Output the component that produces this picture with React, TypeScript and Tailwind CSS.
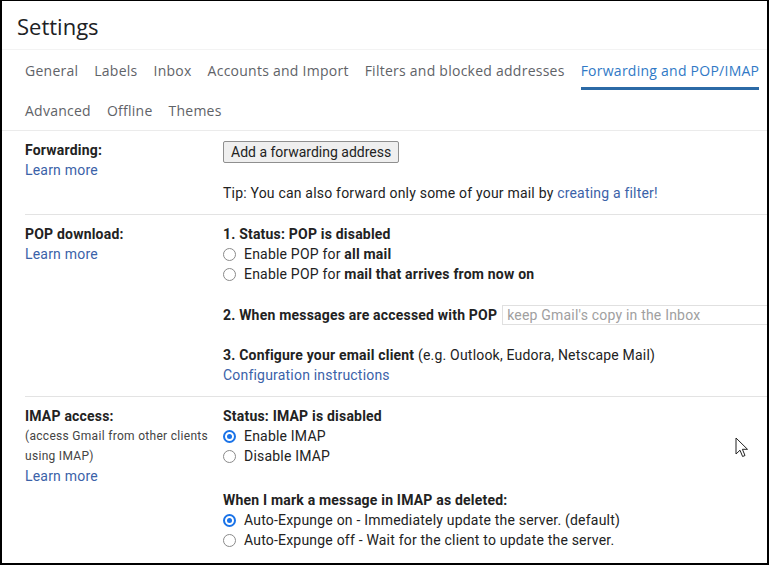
import React from "react";

const Radio = ({ checked = false, children }: { checked?: boolean; children: React.ReactNode }) => (
  <div className="flex items-center h-5 whitespace-nowrap">
    {checked ? (
      <span className="w-[13px] h-[13px] rounded-full border-[2px] border-[#1a73e8] flex items-center justify-center mr-[8px] shrink-0">
        <span className="w-[5px] h-[5px] rounded-full bg-[#1a73e8]" />
      </span>
    ) : (
      <span className="w-[13px] h-[13px] rounded-full border border-[#8a8a8a] mr-[8px] shrink-0 bg-white" />
    )}
    <span>{children}</span>
  </div>
);

const Tab = ({ label, active = false }: { label: string; active?: boolean }) => (
  <div className="flex flex-col px-2">
    <div className={`flex-1 flex items-center pt-[3px] ${active ? "text-[#3079c6]" : "text-[#5f6368]"}`}>{label}</div>
    <div className={`h-[3px] ${active ? "bg-[#2b6aa6]" : "bg-transparent"}`} />
  </div>
);

const Link = ({ children }: { children: React.ReactNode }) => (
  <span className="text-[#3b62a8]">{children}</span>
);

export default function App() {
  return (
    <div className="relative w-[769px] h-[565px] overflow-hidden bg-white border-l-2 border-t border-r-2 border-b-2 border-black box-border font-['Roboto',sans-serif] text-[14px] text-[#222] tracking-[0.2px]">
      <div className="h-[49px] pl-[15px] pt-[3px] flex items-center border-b border-[#f3f3f3] font-['Open_Sans',sans-serif] text-[22px] text-[#202124] tracking-normal">
        Settings
      </div>
      <div className="pl-[15px] border-b border-[#ebebeb] font-['Open_Sans',sans-serif] text-[14px] tracking-[0.25px] whitespace-nowrap">
        <div className="flex h-10">
          <Tab label="General" />
          <Tab label="Labels" />
          <Tab label="Inbox" />
          <Tab label="Accounts and Import" />
          <Tab label="Filters and blocked addresses" />
          <Tab label="Forwarding and POP/IMAP" active />
        </div>
        <div className="flex h-10">
          <Tab label="Advanced" />
          <Tab label="Offline" />
          <Tab label="Themes" />
        </div>
      </div>

      <div className="ml-[23px] border-b border-[#e3e3e3] flex pt-[9px] pb-[11px] leading-5">
        <div className="w-[198px] shrink-0">
          <div className="font-bold">Forwarding:</div>
          <Link>Learn more</Link>
        </div>
        <div className="flex-1">
          <button className="mt-[1px] h-[22px] px-[7px] border border-[#8f8f8f] rounded-[2px] bg-[#efefef] text-[#222] leading-5 tracking-normal">
            Add a forwarding address
          </button>
          <div className="mt-[20px]">
            Tip: You can also forward only some of your mail by <Link>creating a filter!</Link>
          </div>
        </div>
      </div>

      <div className="ml-[23px] border-b border-[#e3e3e3] flex pt-[9px] pb-[11px] leading-5 overflow-hidden">
        <div className="w-[198px] shrink-0">
          <div className="font-bold">POP download:</div>
          <Link>Learn more</Link>
        </div>
        <div className="flex-1 min-w-0">
          <div className="font-bold">1. Status: POP is disabled</div>
          <Radio>
            Enable POP for <b>all mail</b>
          </Radio>
          <Radio>
            Enable POP for <b>mail that arrives from now on</b>
          </Radio>
          <div className="mt-[21px] flex items-center whitespace-nowrap">
            <span className="font-bold">2. When messages are accessed with POP</span>
            <div className="ml-[5px] h-5 w-[320px] shrink-0 border border-[#e0e0e0] pl-[4px] text-[#a0a0a0] flex items-center">
              keep Gmail's copy in the Inbox
            </div>
          </div>
          <div className="mt-[20px]">
            <span className="font-bold">3. Configure your email client</span> (e.g. Outlook, Eudora, Netscape Mail)
          </div>
          <Link>Configuration instructions</Link>
        </div>
      </div>

      <div className="ml-[23px] flex pt-[9px] leading-5">
        <div className="w-[198px] shrink-0">
          <div className="font-bold">IMAP access:</div>
          <div className="text-[12px] text-[#444] tracking-[0.3px]">(access Gmail from other clients</div>
          <div className="text-[12px] text-[#444] tracking-[0.3px]">using IMAP)</div>
          <Link>Learn more</Link>
        </div>
        <div className="flex-1">
          <div className="font-bold">Status: IMAP is disabled</div>
          <Radio checked>Enable IMAP</Radio>
          <Radio>Disable IMAP</Radio>
          <div className="mt-[24px] font-bold">When I mark a message in IMAP as deleted:</div>
          <Radio checked>Auto-Expunge on - Immediately update the server. (default)</Radio>
          <Radio>Auto-Expunge off - Wait for the client to update the server.</Radio>
        </div>
      </div>

      <svg className="absolute left-[733px] top-[436px]" width="14" height="22" viewBox="0 0 14 22">
        <path d="M1 1 L1 17 L5 13.2 L7.6 19.5 L10 18.5 L7.4 12.3 L12.5 12.3 Z" fill="white" stroke="#222" strokeWidth="1" strokeLinejoin="round" />
      </svg>
    </div>
  );
}
